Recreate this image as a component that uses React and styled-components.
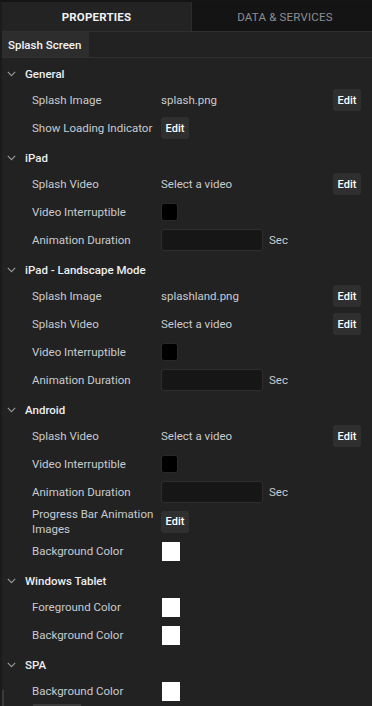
import React from 'react';
import styled, { createGlobalStyle } from 'styled-components';

const GlobalStyle = createGlobalStyle`
  html, body {
    margin: 0;
    padding: 0;
    background: #222222;
  }
  * {
    box-sizing: border-box;
  }
`;

const Panel = styled.div`
  position: relative;
  width: 372px;
  height: 706px;
  overflow: hidden;
  background: #222222;
  border-top: 2px solid #151515;
  border-left: 2px solid #1b1b1b;
  font-family: Roboto, 'Liberation Sans', sans-serif;
  font-size: 11.5px;
  color: #c8cbd0;
`;

const TabBar = styled.div`
  display: grid;
  grid-template-columns: 189px 1fr;
  height: 30px;
  border-bottom: 1px solid #2f2f2f;
`;

const Tab = styled.div`
  display: flex;
  align-items: center;
  justify-content: center;
  font-size: 11.5px;
  letter-spacing: 0.2px;
  text-transform: uppercase;
  font-weight: ${p => (p.active ? 700 : 400)};
  color: ${p => (p.active ? '#eef1f5' : '#8b8e92')};
  background: ${p => (p.active ? '#232323' : '#141414')};
  border-left: ${p => (p.active ? 'none' : '1px solid #2c2c2c')};
  padding-left: ${p => (p.active ? '0' : '6px')};
`;

const SubTabBar = styled.div`
  display: flex;
  height: 26px;
  border-bottom: 1px solid #303030;
`;

const SubTab = styled.div`
  display: flex;
  align-items: center;
  padding: 0 6px;
  width: 87px;
  white-space: nowrap;
  background: #2d2d2d;
  color: #f2f4f7;
  font-weight: 500;
  font-size: 11.5px;
`;

const Section = styled.section`
  padding-top: 3px;
`;

const SectionHeader = styled.div`
  display: flex;
  align-items: center;
  gap: 9px;
  height: 25px;
  padding-left: 5px;
  color: #eceef1;
  font-weight: 500;
  font-size: 11.5px;
  white-space: nowrap;
`;

const Chevron = () => (
  <svg width="9" height="6" viewBox="0 0 9 6" fill="none">
    <path d="M0.8 0.8 L4.5 4.6 L8.2 0.8" stroke="#9a9a9a" strokeWidth="1.1" />
  </svg>
);

const Row = styled.div`
  display: grid;
  grid-template-columns: 129px 1fr auto;
  align-items: center;
  min-height: ${p => (p.tall ? '31px' : '28px')};
  padding: 0 11px 0 30px;
`;

const Label = styled.div`
  color: #c8cbd0;
  line-height: 15px;
  white-space: ${p => (p.wrap ? 'normal' : 'nowrap')};
`;

const Value = styled.div`
  display: flex;
  align-items: center;
  gap: 6px;
  color: #c8cbd0;
  white-space: nowrap;
`;

const EditButton = styled.button`
  width: 28px;
  height: 22px;
  padding: 0;
  border: none;
  border-radius: 3px;
  background: #2f2f2f;
  color: #ffffff;
  font-family: Roboto, 'Liberation Sans', sans-serif;
  font-size: 11px;
  font-weight: 500;
`;

const Checkbox = styled.div`
  width: 17px;
  height: 18px;
  border-radius: 3px;
  background: #000000;
  border: 1px solid #2a2a2a;
`;

const DurationInput = styled.div`
  width: 102px;
  height: 22px;
  border-radius: 3px;
  background: #161616;
  border: 1px solid #2e2e2e;
`;

const Swatch = styled.div`
  width: 18px;
  height: 19px;
  margin-left: 1px;
  background: #ffffff;
`;

const ScrollThumb = styled.div`
  position: absolute;
  left: 31px;
  bottom: 0;
  width: 48px;
  height: 2px;
  background: #3a3a3a;
`;

const EdgeThumb = styled.div`
  position: absolute;
  left: 0;
  bottom: 0;
  width: 2px;
  height: 16px;
  background: #3a3a3a;
`;

const sections = [
  {
    title: 'General',
    rows: [
      { label: 'Splash Image', kind: 'text', text: 'splash.png', edit: true },
      { label: 'Show Loading Indicator', kind: 'edit' },
    ],
  },
  {
    title: 'iPad',
    rows: [
      { label: 'Splash Video', kind: 'text', text: 'Select a video', edit: true },
      { label: 'Video Interruptible', kind: 'check' },
      { label: 'Animation Duration', kind: 'duration' },
    ],
  },
  {
    title: 'iPad - Landscape Mode',
    rows: [
      { label: 'Splash Image', kind: 'text', text: 'splashland.png', edit: true },
      { label: 'Splash Video', kind: 'text', text: 'Select a video', edit: true },
      { label: 'Video Interruptible', kind: 'check' },
      { label: 'Animation Duration', kind: 'duration' },
    ],
  },
  {
    title: 'Android',
    rows: [
      { label: 'Splash Video', kind: 'text', text: 'Select a video', edit: true },
      { label: 'Video Interruptible', kind: 'check' },
      { label: 'Animation Duration', kind: 'duration' },
      { label: 'Progress Bar Animation Images', kind: 'edit', tall: true },
      { label: 'Background Color', kind: 'color' },
    ],
  },
  {
    title: 'Windows Tablet',
    rows: [
      { label: 'Foreground Color', kind: 'color' },
      { label: 'Background Color', kind: 'color' },
    ],
  },
  {
    title: 'SPA',
    rows: [{ label: 'Background Color', kind: 'color' }],
  },
];

const renderValue = row => {
  switch (row.kind) {
    case 'text':
      return <Value>{row.text}</Value>;
    case 'edit':
      return (
        <Value>
          <EditButton>Edit</EditButton>
        </Value>
      );
    case 'check':
      return (
        <Value>
          <Checkbox />
        </Value>
      );
    case 'duration':
      return (
        <Value>
          <DurationInput />
          Sec
        </Value>
      );
    case 'color':
      return (
        <Value>
          <Swatch />
        </Value>
      );
    default:
      return <Value />;
  }
};

export default function App() {
  return (
    <>
      <GlobalStyle />
      <Panel>
        <TabBar>
          <Tab active>Properties</Tab>
          <Tab>Data &amp; Services</Tab>
        </TabBar>
        <SubTabBar>
          <SubTab>Splash Screen</SubTab>
        </SubTabBar>

        {sections.map(section => (
          <Section key={section.title}>
            <SectionHeader>
              <Chevron />
              {section.title}
            </SectionHeader>
            {section.rows.map((row, i) => (
              <Row key={i} tall={row.tall}>
                <Label wrap={row.tall}>{row.label}</Label>
                {renderValue(row)}
                {row.edit ? <EditButton>Edit</EditButton> : <span />}
              </Row>
            ))}
          </Section>
        ))}

        <ScrollThumb />
        <EdgeThumb />
      </Panel>
    </>
  );
}
